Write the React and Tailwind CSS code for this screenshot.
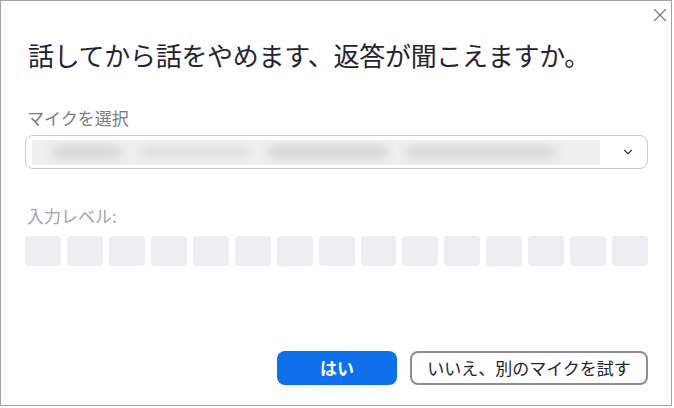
import { X, ChevronDown } from "lucide-react";

const levels = Array.from({ length: 15 }, (_, i) => i);

export default function App() {
    return (
        <div className="w-[674px] h-[408px] bg-white" style={{ fontFamily: '"Noto Sans CJK JP", "Noto Sans", sans-serif' }}>
            <div className="relative w-[672px] h-[406px] border border-[#a3a3a3] flex flex-col pl-[24px] pr-[23px] pt-[36px] pb-[20px]">
                <button className="absolute top-[3px] right-[0px] text-[#7c7c8a]">
                    <X size={22} strokeWidth={1.4} />
                </button>

                <h1 className="text-[26px] leading-[36px] text-[#232333] pl-[3px] tracking-[-0.3px]">
                    話してから話をやめます、返答が聞こえますか。
                </h1>

                <p className="mt-[33px] text-[17px] leading-[24px] text-[#7b7b8a] pl-[2px]">マイクを選択</p>
                <div className="mt-[5px] h-[34px] rounded-[8px] border border-[#cbc7d8] flex items-center pl-[6px] pr-[12px]">
                    <div className="h-[25px] w-[568px] bg-[#efefef] flex items-center gap-[18px] px-[20px] overflow-hidden">
                        <span className="h-[12px] w-[70px] rounded-full bg-[#d6d6d6] blur-[5px]" />
                        <span className="h-[10px] w-[110px] rounded-full bg-[#dedede] blur-[5px]" />
                        <span className="h-[12px] w-[120px] rounded-full bg-[#d4d4d4] blur-[5px]" />
                        <span className="h-[12px] w-[150px] rounded-full bg-[#d8d8d8] blur-[5px]" />
                    </div>
                    <ChevronDown size={14} strokeWidth={2} className="ml-auto text-[#393946]" />
                </div>

                <p className="mt-[35px] text-[17px] leading-[24px] text-[#a3a3b0] pl-[2px]">入力レベル:</p>
                <div className="mt-[8px] flex gap-[6px]">
                    {levels.map((i) => (
                        <div key={i} className="w-[36px] h-[30px] rounded-[4px] bg-[#ededf2]" />
                    ))}
                </div>

                <div className="mt-auto flex justify-end gap-[13px]">
                    <button className="w-[120px] h-[34px] rounded-[8px] bg-[#0e71eb] text-white text-[17px] font-bold">
                        はい
                    </button>
                    <button className="w-[238px] h-[34px] rounded-[8px] border-2 border-[#8e8e96] text-[#232333] text-[17px]">
                        いいえ、別のマイクを試す
                    </button>
                </div>
            </div>
        </div>
    );
}
